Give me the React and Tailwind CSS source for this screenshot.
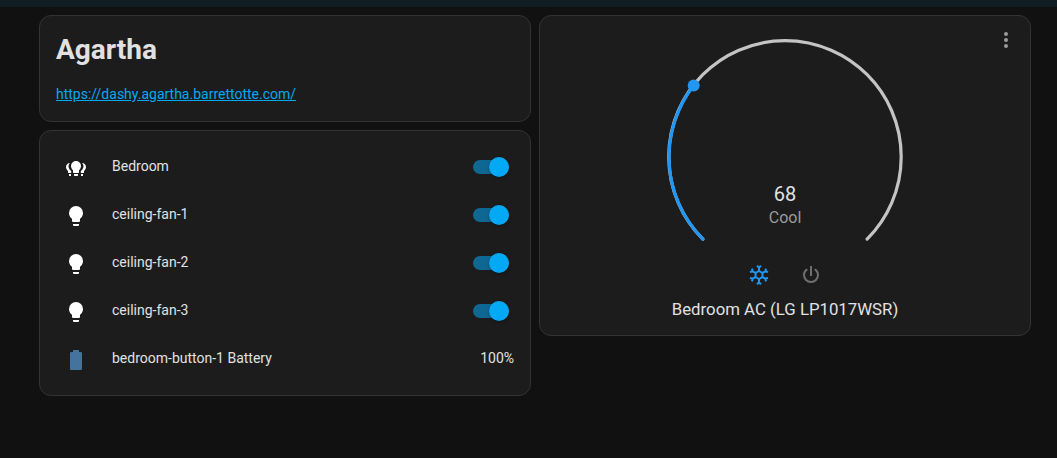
import React from "react";

const BULB =
  "M12,2A7,7 0 0,0 5,9C5,11.38 6.19,13.47 8,14.74V17A1,1 0 0,0 9,18H15A1,1 0 0,0 16,17V14.74C17.81,13.47 19,11.38 19,9A7,7 0 0,0 12,2M9,21A1,1 0 0,0 10,22H14A1,1 0 0,0 15,21V20H9V21Z";
const BULB_GROUP =
  "M12,5A5,5 0 0,0 7,10C7,11.9 8,13.4 9,14.3V16.3A0.7,0.7 0 0,0 9.7,17H14.3A0.7,0.7 0 0,0 15,16.3V14.3C16,13.4 17,11.9 17,10A5,5 0 0,0 12,5M10,18V19.3A0.7,0.7 0 0,0 10.7,20H13.3A0.7,0.7 0 0,0 14,19.3V18H10M6,7C3.6,7 2,8.8 2,11C2,12.8 3,14 4,15V16.4A0.6,0.6 0 0,0 4.6,17H7.2V15C5.5,13.6 4.5,12 4.5,10C4.5,8.9 5,7.8 6,7M18,7C20.4,7 22,8.8 22,11C22,12.8 21,14 20,15V16.4A0.6,0.6 0 0,1 19.4,17H16.8V15C18.5,13.6 19.5,12 19.5,10C19.5,8.9 19,7.8 18,7M5,18V19.5A0.5,0.5 0 0,0 5.5,20H7V18H5M17,18V20H18.5A0.5,0.5 0 0,0 19,19.5V18H17Z";
const BATTERY =
  "M16.67,4H15V2H9V4H7.33A1.33,1.33 0 0,0 6,5.33V20.67C6,21.4 6.6,22 7.33,22H16.67A1.33,1.33 0 0,0 18,20.67V5.33C18,4.6 17.4,4 16.67,4Z";
const SNOWFLAKE =
  "M20.79,13.95L18.46,14.57L16.46,13.44V10.56L18.46,9.43L20.79,10.05L21.31,8.12L19.54,7.65L20,5.88L18.07,5.36L17.45,7.69L15.45,8.82L13,7.38V5.12L14.71,3.41L13.29,2L12,3.29L10.71,2L9.29,3.41L11,5.12V7.38L8.5,8.82L6.5,7.69L5.92,5.36L4,5.88L4.47,7.65L2.7,8.12L3.22,10.05L5.55,9.43L7.55,10.56V13.45L5.55,14.58L3.22,13.96L2.7,15.89L4.47,16.36L4,18.12L5.93,18.64L6.55,16.31L8.55,15.18L11,16.62V18.88L9.29,20.59L10.71,22L12,20.71L13.29,22L14.7,20.59L13,18.88V16.62L15.5,15.17L17.5,16.3L18.12,18.63L20,18.12L19.53,16.35L21.3,15.88L20.79,13.95M9.5,10.56L12,9.11L14.5,10.56V13.44L12,14.89L9.5,13.44V10.56Z";
const POWER =
  "M16.56,5.44L15.11,6.89C16.84,7.94 18,9.83 18,12A6,6 0 0,1 12,18A6,6 0 0,1 6,12C6,9.83 7.16,7.94 8.88,6.88L7.44,5.44C5.36,6.88 4,9.28 4,12A8,8 0 0,0 12,20A8,8 0 0,0 20,12C20,9.28 18.64,6.88 16.56,5.44M13,3H11V13H13V3";
const DOTS =
  "M12,16A2,2 0 0,1 14,18A2,2 0 0,1 12,20A2,2 0 0,1 10,18A2,2 0 0,1 12,16M12,10A2,2 0 0,1 14,12A2,2 0 0,1 12,14A2,2 0 0,1 10,12A2,2 0 0,1 12,10M12,4A2,2 0 0,1 14,6A2,2 0 0,1 12,8A2,2 0 0,1 10,6A2,2 0 0,1 12,4Z";

function Icon({ path, className }) {
  return (
    <svg viewBox="0 0 24 24" className={`size-6 shrink-0 fill-current ${className}`}>
      <path d={path} />
    </svg>
  );
}

function Card({ className, children }) {
  return (
    <section className={`rounded-xl border border-[#333333] bg-[#1c1c1c] ${className}`}>
      {children}
    </section>
  );
}

function Toggle() {
  return (
    <button
      role="switch"
      aria-checked="true"
      className="mr-[5px] flex h-[14px] w-9 items-center justify-end rounded-full bg-[#0f6894]"
    >
      <span className="size-5 shrink-0 rounded-full bg-[#03a9f4] shadow-[0_1px_3px_rgba(0,0,0,0.35)]" />
    </button>
  );
}

function Row({ icon, iconClass, name, children }) {
  return (
    <div className="flex h-10 items-center">
      <div className="flex h-full w-10 items-center justify-center pt-0.5">
        <Icon path={icon} className={iconClass} />
      </div>
      <div className="ml-4 flex-1 pb-0.5 text-sm leading-5">{name}</div>
      {children}
    </div>
  );
}

const lights = [
  { name: "Bedroom", icon: BULB_GROUP },
  { name: "ceiling-fan-1", icon: BULB },
  { name: "ceiling-fan-2", icon: BULB },
  { name: "ceiling-fan-3", icon: BULB },
];

export default function App() {
  return (
    <div className="h-[458px] w-[1057px] overflow-hidden bg-[#111111] font-['Roboto',sans-serif] text-[#e1e1e1]">
      <div className="h-[7px] bg-[#101e24]" />
      <main className="flex items-start gap-2 pt-2 pl-[39px]">
        <div className="flex w-[492px] flex-col gap-2">
          <Card className="h-[107px] px-4 pt-3.5">
            <h1 className="text-[28px] leading-10 font-bold">Agartha</h1>
            <a
              href="https://dashy.agartha.barrettotte.com/"
              className="mt-3.5 block w-fit text-sm leading-5 text-[#03a9f4] underline"
            >
              https://dashy.agartha.barrettotte.com/
            </a>
          </Card>
          <Card className="flex flex-col gap-2 p-4">
            {lights.map((light) => (
              <Row key={light.name} icon={light.icon} iconClass="text-white" name={light.name}>
                <Toggle />
              </Row>
            ))}
            <Row icon={BATTERY} iconClass="text-[#44739e]" name="bedroom-button-1 Battery">
              <span className="pb-0.5 text-sm leading-5">100%</span>
            </Row>
          </Card>
        </div>

        <Card className="relative flex h-[321px] w-[492px] flex-col items-center">
          <button aria-label="More" className="absolute top-3 right-3 text-[#9b9b9b]">
            <Icon path={DOTS} className="" />
          </button>
          <div className="relative mt-5 h-[206px] w-[240px]">
            <svg viewBox="0 0 240 206" className="h-[206px] w-[240px]" fill="none" strokeLinecap="round" strokeWidth="3.2">
              <path d="M37.9 203.1A116.2 116.2 0 1 1 202.1 203.1" stroke="#c4c4c4" />
              <path d="M37.9 203.1A116.2 116.2 0 0 1 28.7 49.5" stroke="#2196f3" />
              <circle cx="28.7" cy="49.5" r="6" fill="#2196f3" />
            </svg>
            <div className="absolute inset-x-0 top-[146px] flex flex-col items-center">
              <span className="text-[20px] leading-6">68</span>
              <span className="text-base leading-6 text-[#9b9b9b]">Cool</span>
            </div>
          </div>
          <div className="mt-[21px] flex gap-7">
            <Icon path={SNOWFLAKE} className="text-[#2196f3]" />
            <Icon path={POWER} className="text-[#6f6f6f]" />
          </div>
          <div className="mt-2.5 text-[16.8px] leading-6">Bedroom AC (LG LP1017WSR)</div>
        </Card>
      </main>
    </div>
  );
}
